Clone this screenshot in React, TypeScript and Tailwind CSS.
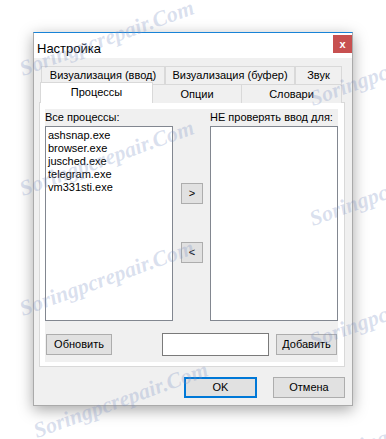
import React from 'react';

const font = { fontFamily: '"Liberation Sans", Arial, sans-serif' };

const processes = ['ashsnap.exe', 'browser.exe', 'jusched.exe', 'telegram.exe', 'vm331sti.exe'];

// watermark positions (left edge x, top y)
const marks = [
  { x: 24, y: 58 },
  { x: 24, y: 178 },
  { x: 24, y: 298 },
  { x: 38, y: 420 },
  { x: 314, y: 88 },
  { x: 314, y: 208 },
  { x: 314, y: 330 },
  { x: 334, y: 446 },
];

const Tab = ({ label, width }: { label: string; width: string }) => (
  <div className={`${width} h-full flex items-center justify-center border-t border-l border-r border-[#d9d9d9] bg-[#f0f0f0] text-[11px] text-black`}>
    {label}
  </div>
);

const SmallButton = ({ label, className }: { label: string; className: string }) => (
  <button className={`${className} bg-[#e1e1e1] border border-[#adadad] text-[11px] text-black flex items-center justify-center leading-none`}>
    {label}
  </button>
);

export default function App() {
  return (
    <div className="relative w-[386px] h-[439px] bg-white pt-[32px] pl-[33px] overflow-hidden" style={font}>
      <div className="w-[320px] h-[374px] bg-[#f0f0f0] border-t border-[#1883d7] border-l border-r border-b border-l-[#aaaaaa] border-r-[#aaaaaa] border-b-[#aaaaaa] shadow-[0_4px_14px_rgba(0,0,0,0.35)] flex flex-col">
        {/* title bar */}
        <div className="h-[25px] bg-white flex items-start justify-between pl-[3px]">
          <span className="text-[13px] text-black mt-[6px]">Настройка</span>
          <div className="w-[19px] h-[18px] bg-[#c75050] mt-[2px] flex items-center justify-center text-white text-[11px] font-bold leading-none">
            x
          </div>
        </div>

        <div className="pl-[5px] pt-[8px]">
          {/* tabs */}
          <div className="pl-[2px] flex flex-col">
            <div className="flex h-[18px]">
              <Tab label="Визуализация (ввод)" width="w-[124px]" />
              <Tab label="Визуализация (буфер)" width="w-[130px]" />
              <Tab label="Звук" width="w-[47px]" />
            </div>
            <div className="flex h-[19px] items-end">
              <div className="w-[113px] h-[21px] -ml-[1px] bg-white border-t border-l border-r border-[#d9d9d9] relative z-10 flex items-center justify-center text-[11px] text-black pb-[2px]">
                Процессы
              </div>
              <div className="w-[89px] h-[19px] bg-[#f0f0f0] border-t border-r border-[#d9d9d9] flex items-center justify-center text-[11px] text-black">
                Опции
              </div>
              <div className="w-[100px] h-[19px] bg-[#f0f0f0] border-t border-r border-[#d9d9d9] flex items-center justify-center text-[11px] text-black">
                Словари
              </div>
            </div>
          </div>

          {/* tab page */}
          <div className="w-[306px] h-[265px] bg-white border border-[#d9d9d9] -mt-[1px] pl-[5px] pt-[6px]">
            <div className="w-[293px] h-[253px] bg-[#f0f0f0] flex flex-col">
              <div className="flex h-[16px] items-center text-[11px] text-black pt-[1px]">
                <span className="w-[165px]">Все процессы:</span>
                <span>НЕ проверять ввод для:</span>
              </div>
              <div className="flex mt-[1px]">
                <div className="w-[128px] h-[195px] bg-white border border-[#828790] pl-[2px] pt-[2px] text-[11px] text-black leading-[13px]">
                  {processes.map((p) => (
                    <div key={p}>{p}</div>
                  ))}
                </div>
                <div className="w-[37px] flex flex-col items-center pt-[57px] pl-[1px]">
                  <SmallButton label=">" className="w-[22px] h-[21px]" />
                  <SmallButton label="<" className="w-[22px] h-[21px] mt-[38px]" />
                </div>
                <div className="w-[128px] h-[195px] bg-white border border-[#828790]" />
              </div>
              <div className="flex items-center mt-[12px] h-[23px]">
                <SmallButton label="Обновить" className="w-[66px] h-[21px] ml-[1px]" />
                <div className="w-[107px] h-[23px] bg-white border border-[#7a7a7a] ml-[50px]" />
                <SmallButton label="Добавить" className="w-[61px] h-[21px] ml-[7px]" />
              </div>
            </div>
          </div>

          {/* bottom buttons */}
          <div className="flex mt-[10px] pl-[145px]">
            <button className="w-[73px] h-[21px] bg-[#e1e1e1] border-2 border-[#0078d7] text-[11px] text-black flex items-center justify-center">
              OK
            </button>
            <button className="w-[72px] h-[21px] bg-[#e1e1e1] border border-[#adadad] text-[11px] text-black flex items-center justify-center ml-[16px]">
              Отмена
            </button>
          </div>
        </div>
      </div>

      {/* watermark overlay */}
      {marks.map((m, i) => (
        <span
          key={i}
          className="absolute pointer-events-none whitespace-nowrap italic font-bold text-[22px] leading-none text-[rgba(125,145,195,0.28)] origin-bottom-left -rotate-[20deg]"
          style={{ left: m.x, top: m.y, fontFamily: '"Liberation Serif", serif' }}
        >
          Soringpcrepair.Com
        </span>
      ))}
    </div>
  );
}
